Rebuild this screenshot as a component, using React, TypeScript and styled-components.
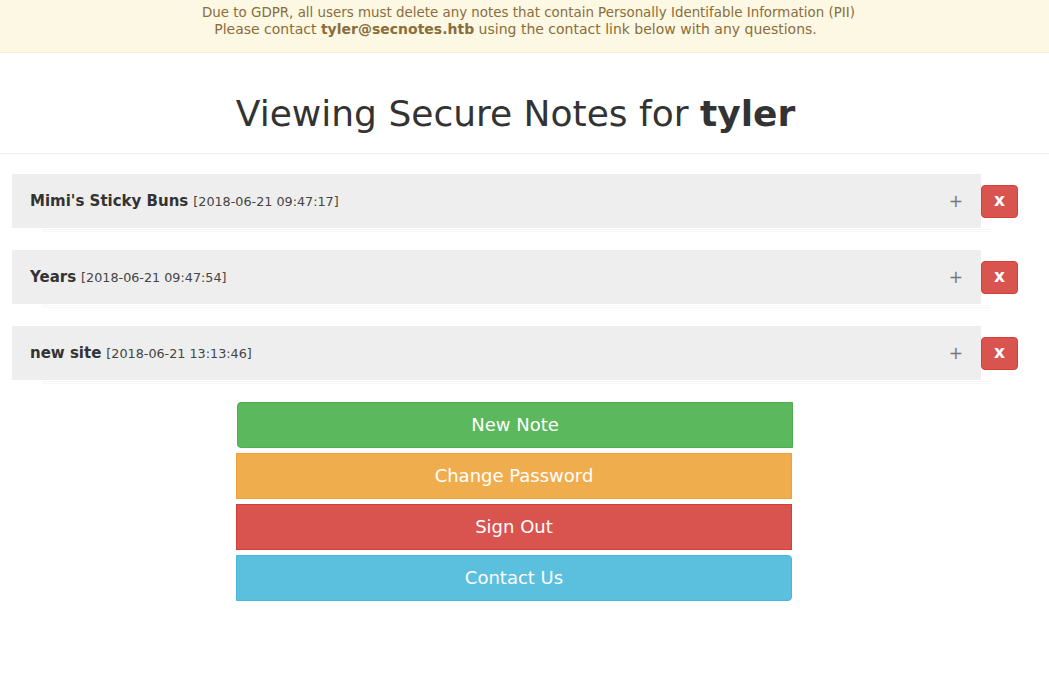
import React from "react";
import styled, { createGlobalStyle } from "styled-components";

const Global = createGlobalStyle`
  html, body { margin: 0; padding: 0; background: #fff; }
  body { font-family: "DejaVu Sans", "Liberation Sans", sans-serif; color: #333; }
  * { box-sizing: border-box; }
`;

const Banner = styled.div`
  background: #fcf8e3;
  color: #8a6d3b;
  border-bottom: 1px solid #faebcc;
  text-align: center;
  font-family: "DejaVu Sans", sans-serif;
  line-height: 17px;
  padding: 4px 18px 14px 0;
  strong { font-weight: bold; }
`;

const BannerLine = styled.div<{ $indent?: number; $size: number }>`
  padding-left: ${(p) => p.$indent ?? 0}px;
  font-size: ${(p) => p.$size}px;
`;

const Header = styled.div`
  border-bottom: 1px solid #eee;
  padding: 41px 18px 19px 0;
  text-align: center;
`;

const Title = styled.h1`
  margin: 0;
  font-size: 36px;
  line-height: 40px;
  font-weight: normal;
  color: #333;
  b { font-weight: bold; }
`;

const Notes = styled.div`
  padding: 20px 31px 0 12px;
  display: flex;
  flex-direction: column;
  gap: 18px;
`;

const NoteRow = styled.div`
  display: flex;
  align-items: flex-start;
`;

const NoteBody = styled.div`
  flex: 1;
  display: flex;
  flex-direction: column;
`;

const Panel = styled.div`
  background: #eee;
  height: 54px;
  display: flex;
  align-items: center;
  padding: 0 18px;
`;

const NoteTitle = styled.span`
  font-weight: bold;
  font-size: 15px;
  color: #333;
`;

const NoteDate = styled.span`
  font-size: 12.75px;
  color: #444;
  margin-left: 5px;
`;

const Plus = styled.span`
  margin-left: auto;
  color: #777;
  font-size: 17px;
`;

const Shadow = styled.div`
  height: 3px;
  margin: 1px -10px 0 30px;
  border-top: 1px solid #f6f6f6;
  border-bottom: 1px solid #f8f8f8;
`;

const DeleteButton = styled.button`
  margin-top: 11px;
  width: 37px;
  height: 33px;
  background: #d9534f;
  border: 1px solid #d43f3a;
  border-radius: 4px;
  color: #fff;
  font-family: "DejaVu Sans", sans-serif;
  font-weight: bold;
  font-size: 17px;
  line-height: 1;
  padding: 0 0 3px;
  display: flex;
  align-items: center;
  justify-content: center;
`;

const Actions = styled.div`
  display: flex;
  flex-direction: column;
  gap: 5px;
  width: 556px;
  margin: 18px 0 0 236px;
`;

const palette = {
  green: ["#5cb85c", "#4cae4c"],
  orange: ["#f0ad4e", "#eea236"],
  red: ["#d9534f", "#d43f3a"],
  blue: ["#5bc0de", "#46b8da"],
};

const ActionButton = styled.button<{ $tone: keyof typeof palette; $radius: string; $shift?: number }>`
  height: 46px;
  width: 100%;
  background: ${(p) => palette[p.$tone][0]};
  border: 1px solid ${(p) => palette[p.$tone][1]};
  border-radius: ${(p) => p.$radius};
  color: #fff;
  font-family: "DejaVu Sans", sans-serif;
  font-size: 18px;
  transform: translateX(${(p) => p.$shift ?? 0}px);
  padding: 0 0 2px;
`;

const notes = [
  { title: "Mimi's Sticky Buns", date: "2018-06-21 09:47:17" },
  { title: "Years", date: "2018-06-21 09:47:54" },
  { title: "new site", date: "2018-06-21 13:13:46" },
];

export default function App() {
  return (
    <>
      <Global />
      <Banner>
        <BannerLine $indent={26} $size={13.4}>
          Due to GDPR, all users must delete any notes that contain Personally Identifable Information (PII)
        </BannerLine>
        <BannerLine $size={14}>
          Please contact <strong>tyler@secnotes.htb</strong> using the contact link below with any questions.
        </BannerLine>
      </Banner>
      <Header>
        <Title>
          Viewing Secure Notes for <b>tyler</b>
        </Title>
      </Header>
      <Notes>
        {notes.map((n) => (
          <NoteRow key={n.title}>
            <NoteBody>
              <Panel>
                <NoteTitle>{n.title}</NoteTitle>
                <NoteDate>[{n.date}]</NoteDate>
                <Plus>+</Plus>
              </Panel>
              <Shadow />
            </NoteBody>
            <DeleteButton>x</DeleteButton>
          </NoteRow>
        ))}
      </Notes>
      <Actions>
        <ActionButton $tone="green" $radius="4px 0 0 4px" $shift={1}>New Note</ActionButton>
        <ActionButton $tone="orange" $radius="0">Change Password</ActionButton>
        <ActionButton $tone="red" $radius="0">Sign Out</ActionButton>
        <ActionButton $tone="blue" $radius="0 4px 4px 0">Contact Us</ActionButton>
      </Actions>
    </>
  );
}
